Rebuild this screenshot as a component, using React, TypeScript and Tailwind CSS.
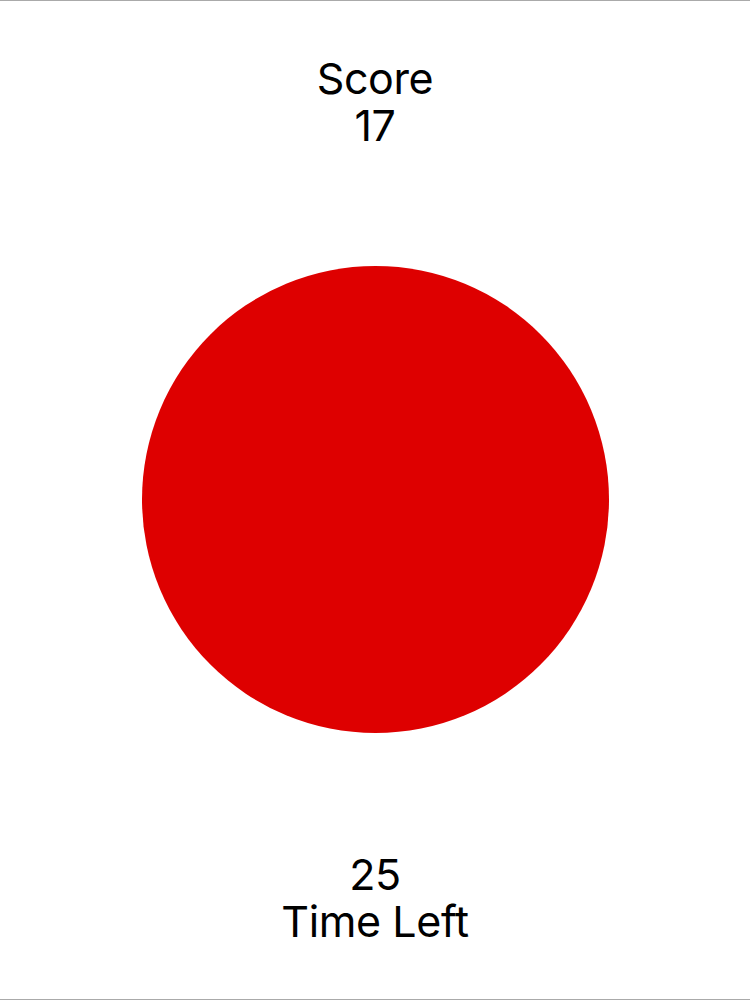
export default function App() {
  return (
    <main className="flex h-screen flex-col items-center justify-between border-y border-[#aaaaaa] bg-white py-[54px] text-black [font-family:Inter,'Liberation_Sans',sans-serif]">
      <div className="flex flex-col items-center text-[43px] leading-[47px] tracking-[-0.4px]">
        <span>Score</span>
        <span>17</span>
      </div>
      <div className="-mt-[2px] h-[467px] w-[467px] rounded-full bg-[#de0000]" />
      <div className="flex flex-col items-center text-[43px] leading-[47px] tracking-[-0.4px]">
        <span>25</span>
        <span>Time Left</span>
      </div>
    </main>
  );
}
